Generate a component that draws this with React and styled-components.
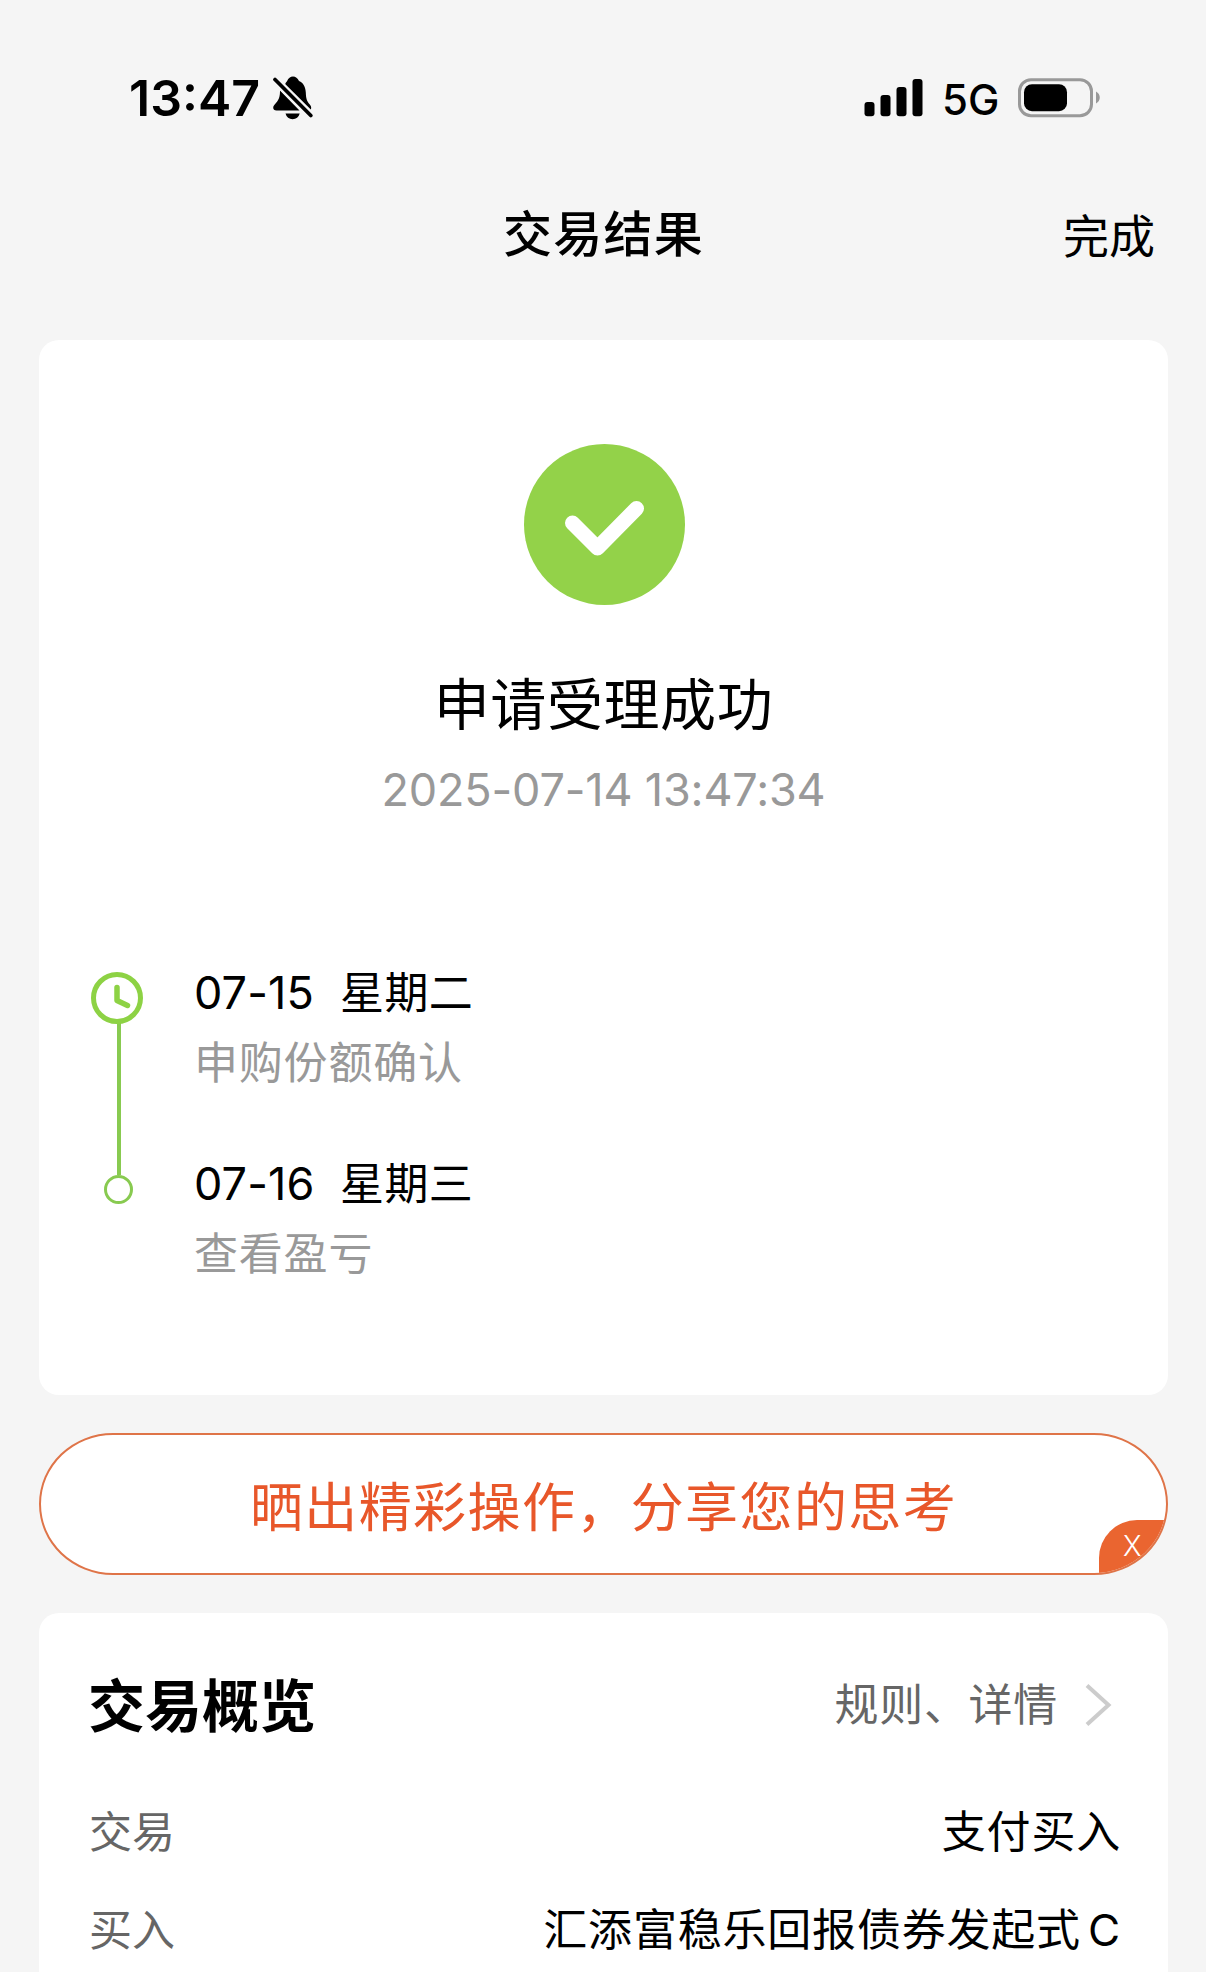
import React from "react";
import styled, { createGlobalStyle } from "styled-components";

const GlobalStyle = createGlobalStyle`
  * { box-sizing: border-box; }
  html, body { margin: 0; padding: 0; background: #f5f5f5; }
  body { overflow: hidden; }
`;

const Screen = styled.main`
  width: 1206px;
  height: 1972px;
  overflow: hidden;
  display: flex;
  flex-direction: column;
  background: #f5f5f5;
  color: #000;
  font-family: Inter, "Noto Sans CJK SC", sans-serif;
  white-space: nowrap;
`;

const StatusBar = styled.header`
  height: 156px;
  flex: none;
  padding: 68px 105px 0 129px;
  display: flex;
  justify-content: space-between;
  align-items: flex-start;
`;

const StatusGroup = styled.div`
  height: 60px;
  display: flex;
  align-items: center;
`;

const Clock = styled.span`
  width: 144px;
  font-size: 50px;
  line-height: 60px;
  font-weight: 600;
`;

const Network = styled.span`
  width: 76px;
  margin-left: 18px;
  font-size: 42px;
  line-height: 60px;
  font-weight: 500;
  padding-top: 3px;
`;

const NavBar = styled.nav`
  height: 154px;
  flex: none;
  padding: 0 51px 0 52px;
  display: grid;
  grid-template-columns: 1fr auto 1fr;
`;

const NavTitle = styled.h1`
  grid-column: 2;
  margin: 44px 0 0;
  font-size: 49px;
  line-height: 70px;
  font-weight: 500;
  letter-spacing: 1.2px;
`;

const NavAction = styled.span`
  margin-top: 45px;
  justify-self: end;
  font-size: 46px;
  line-height: 70px;
`;

const Content = styled.div`
  flex: none;
  padding: 30px 38px 0 39px;
  display: flex;
  flex-direction: column;
  gap: 38px;
`;

const Card = styled.section`
  height: ${(p) => p.$height}px;
  flex: none;
  background: #fff;
  border-radius: 20px;
`;

const Result = styled.div`
  padding-top: 104px;
  display: flex;
  flex-direction: column;
  align-items: center;
`;

const ResultTitle = styled.h2`
  margin: 59px 0 0;
  font-size: 56px;
  line-height: 80px;
  font-weight: 400;
  letter-spacing: 0.6px;
`;

const ResultTime = styled.time`
  margin-top: 15px;
  font-size: 45px;
  line-height: 60px;
  color: #999;
  letter-spacing: -0.15px;
`;

const Timeline = styled.div`
  margin-top: 138px;
  padding-left: 51px;
  display: flex;
`;

const TimelineTrack = styled.svg`
  width: 56px;
  height: 240px;
  margin-top: 12px;
`;

const Steps = styled.div`
  margin-left: 48px;
  display: flex;
  flex-direction: column;
  gap: 51px;
`;

const Step = styled.div`
  display: flex;
  flex-direction: column;
`;

const StepDate = styled.div`
  display: flex;
  font-size: 44px;
  line-height: 70px;
  letter-spacing: 0.4px;
`;

const StepDay = styled.span`
  width: 146px;
  font-size: 45px;
  letter-spacing: 0.1px;
`;

const StepNote = styled.div`
  font-size: 44px;
  line-height: 70px;
  color: #999;
  letter-spacing: 0.8px;
`;

const ShareButton = styled.div`
  position: relative;
  height: 142px;
  display: flex;
  align-items: center;
  justify-content: center;
  overflow: hidden;
  background: #fff;
  border: 2px solid #df7448;
  border-radius: 74px / 71px;
  color: #e8572a;
  font-size: 53px;
  letter-spacing: 1.4px;
  line-height: 80px;
  padding-top: 8px;
`;

const CloseBadge = styled.span`
  position: absolute;
  right: -2px;
  bottom: -2px;
  width: 69px;
  height: 55px;
  padding-left: 24px;
  background: #ea6530;
  border-top-left-radius: 38px;
  color: #fff;
  font-size: 28px;
  line-height: 52px;
  font-weight: 300;
  letter-spacing: 0;
`;

const OverviewHeader = styled.div`
  padding: 54px 55px 0 49px;
  display: flex;
  justify-content: space-between;
  align-items: center;
`;

const OverviewTitle = styled.h2`
  margin: 0;
  font-size: 57px;
  line-height: 80px;
  font-weight: 700;
`;

const DetailLink = styled.span`
  display: flex;
  align-items: center;
  gap: 27px;
  padding-bottom: 4px;
  color: #666;
  font-size: 44px;
  line-height: 76px;
  letter-spacing: 0.7px;
`;

const Rows = styled.dl`
  margin: 50px 47px 0 50px;
  display: flex;
  flex-direction: column;
`;

const Row = styled.div`
  height: 98px;
  display: flex;
  justify-content: space-between;
  font-size: 44px;
  line-height: 70px;
`;

const RowLabel = styled.dt`
  color: #666;
  font-size: 43px;
`;

const RowValue = styled.dd`
  margin: 0;
  letter-spacing: 0.8px;
  word-spacing: -6px;
`;

const BellOff = () => (
  <svg width="40" height="44" viewBox="0 0 40 44">
    <path d="M14 5.2C15.5 2 17.3.5 20 .5S24.500 2 26 5c4.500 2 6.500 6 6.800 11.500.3 6.500 1 8.500 4.200 12.200 1.500 1.800 1.500 3.600.5 5.200L12 8.500c.4-1.400 1-2.400 2-3.300ZM7 14.500 26.500 34.500H3.500C.2 34.500-.8 31.500 1.300 29c3-3.600 5.900-5.600 5.700-14.500ZM12.500 37.500h14.200c-1 3.600-3.600 5.700-7.100 5.700s-6.100-2.100-7.100-5.700Z" fill="#000" />
    <path d="M2 3.500 38 39.500" stroke="#f5f5f5" strokeWidth="8" />
    <path d="M2 3.500 37.800 39.500" stroke="#000" strokeWidth="3.700" strokeLinecap="round" />
  </svg>
);

const Signal = () => (
  <svg width="60" height="38" viewBox="0 0 60 38">
    <rect x="0.500" y="23" width="10" height="14.300" rx="3" />
    <rect x="16.500" y="16" width="10" height="21.300" rx="3" />
    <rect x="32.500" y="8" width="10" height="29.300" rx="3" />
    <rect x="48.500" y="0" width="10" height="37.300" rx="3" />
  </svg>
);

const Battery = () => (
  <svg width="83" height="40" viewBox="0 0 83 40">
    <rect x="1.500" y="1.700" width="72" height="36" rx="11.500" fill="none" stroke="#999" strokeWidth="3" />
    <rect x="6" y="6.200" width="43" height="27" rx="8" />
    <path d="M78 13.500c5 2.500 5 9.500 0 12Z" fill="#999" />
  </svg>
);

const SuccessMark = () => (
  <svg width="162" height="162" viewBox="0 0 162 162">
    <circle cx="81.500" cy="80.500" r="80.500" fill="#93d249" />
    <path d="M49.500 79 74.500 104 113.500 64.500" fill="none" stroke="#fff" strokeWidth="15" strokeLinecap="round" strokeLinejoin="round" />
  </svg>
);

const Chevron = () => (
  <svg width="28" height="42" viewBox="0 0 28 42">
    <path d="M2 1.500 23.500 21 2 40.500" fill="none" stroke="#ccc" strokeWidth="4" />
  </svg>
);

const steps = [
  { day: "07-15", week: "星期二", note: "申购份额确认" },
  { day: "07-16", week: "星期三", note: "查看盈亏" },
];

const rows = [
  { label: "交易", value: "支付买入" },
  { label: "买入", value: "汇添富稳乐回报债券发起式 C" },
];

export default function App() {
  return (
    <Screen>
      <GlobalStyle />
      <StatusBar>
        <StatusGroup>
          <Clock>13:47</Clock>
          <BellOff />
        </StatusGroup>
        <StatusGroup>
          <Signal />
          <Network>5G</Network>
          <Battery />
        </StatusGroup>
      </StatusBar>
      <NavBar>
        <NavTitle>交易结果</NavTitle>
        <NavAction>完成</NavAction>
      </NavBar>
      <Content>
        <Card $height={1055}>
          <Result>
            <SuccessMark />
            <ResultTitle>申请受理成功</ResultTitle>
            <ResultTime>2025-07-14 13:47:34</ResultTime>
          </Result>
          <Timeline>
            <TimelineTrack viewBox="0 0 56 240">
              <path d="M29 52V205" stroke="#88ca50" strokeWidth="4" />
              <circle cx="27" cy="28" r="23.500" fill="#fff" stroke="#8dd244" strokeWidth="5" />
              <path d="M27 17.500V30.500L37.500 35.500" fill="none" stroke="#8dd244" strokeWidth="5.500" strokeLinecap="round" strokeLinejoin="round" />
              <circle cx="28.500" cy="219.500" r="13" fill="#fff" stroke="#88ca50" strokeWidth="3" />
            </TimelineTrack>
            <Steps>
              {steps.map((s) => (
                <Step key={s.day}>
                  <StepDate>
                    <StepDay>{s.day}</StepDay>
                    <span>{s.week}</span>
                  </StepDate>
                  <StepNote>{s.note}</StepNote>
                </Step>
              ))}
            </Steps>
          </Timeline>
        </Card>
        <ShareButton>
          晒出精彩操作，分享您的思考
          <CloseBadge>X</CloseBadge>
        </ShareButton>
        <Card $height={420}>
          <OverviewHeader>
            <OverviewTitle>交易概览</OverviewTitle>
            <DetailLink>
              规则、详情
              <Chevron />
            </DetailLink>
          </OverviewHeader>
          <Rows>
            {rows.map((r) => (
              <Row key={r.label}>
                <RowLabel>{r.label}</RowLabel>
                <RowValue>{r.value}</RowValue>
              </Row>
            ))}
          </Rows>
        </Card>
      </Content>
    </Screen>
  );
}
